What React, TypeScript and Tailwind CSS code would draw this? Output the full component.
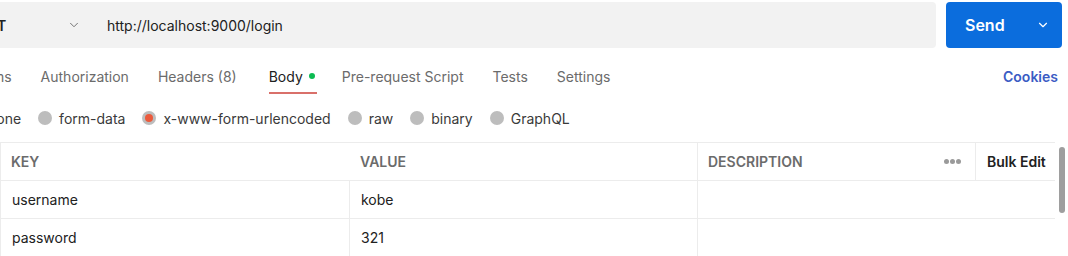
import { ChevronDown } from "lucide-react";

const tabs = [
  { label: "Params", active: false },
  { label: "Authorization", active: false },
  { label: "Headers (8)", active: false },
  { label: "Body", active: true },
  { label: "Pre-request Script", active: false },
  { label: "Tests", active: false },
  { label: "Settings", active: false },
];

const bodyTypes = ["none", "form-data", "x-www-form-urlencoded", "raw", "binary", "GraphQL"];

const rows = [
  { key: "username", value: "kobe" },
  { key: "password", value: "321" },
];

function Radio({ checked }: { checked?: boolean }) {
  return (
    <span className="flex h-[14px] w-[14px] items-center justify-center rounded-full bg-[#bdbdbd]">
      {checked && <span className="h-[8px] w-[8px] rounded-full bg-[#eb5a3c]" />}
    </span>
  );
}

export default function App() {
  return (
    <div className="h-[256px] w-[1068px] overflow-hidden bg-white font-['Inter',sans-serif] text-[14px] text-[#212121]">
      {/* url bar */}
      <div className="flex h-[50px] items-start gap-[10px] pt-[2px] pr-[6px]">
        <div className="flex h-[46px] flex-1 items-center rounded-r-[4px] bg-[#f2f2f2]">
          <span className="-ml-[32px] w-[92px] font-semibold">POST</span>
          <ChevronDown className="ml-[7px] h-[14px] w-[14px] text-[#6b6b6b]" strokeWidth={1.6} />
          <span className="ml-[26px] text-[#212121]">http://localhost:9000/login</span>
        </div>
        <button className="flex h-[46px] w-[116px] items-center rounded-[4px] bg-[#0b6ddd] text-white">
          <span className="ml-[19px] text-[16px] font-semibold">Send</span>
          <ChevronDown className="ml-auto mr-[12px] h-[14px] w-[14px]" strokeWidth={2} />
        </button>
      </div>

      {/* tabs */}
      <div className="mt-[2px] flex h-[48px] items-center pr-[10px]">
        <div className="-ml-[38px] flex h-full items-center gap-[29px]">
          {tabs.map((t) => (
            <div
              key={t.label}
              className={`relative flex h-full items-center ${t.active ? "ml-[3px] -mr-[2px] text-[#212121]" : "text-[#6b6b6b]"}`}
            >
              <span>{t.label}</span>
              {t.active && <span className="ml-[6px] h-[6px] w-[6px] rounded-full bg-[#0cbb52]" />}
              {t.active && <span className="absolute bottom-[6px] left-0 right-[-2px] h-[2px] bg-[#d9706a]" />}
            </div>
          ))}
        </div>
        <span className="ml-auto font-semibold text-[#3b5cc4]">Cookies</span>
      </div>

      {/* body types */}
      <div className="-ml-[12px] flex h-[36px] items-center gap-[17px]">
        {bodyTypes.map((b) => (
          <label key={b} className="flex items-center gap-[7px] text-[#3a3a3a]">
            {b !== "none" && <Radio checked={b === "x-www-form-urlencoded"} />}
            <span>{b}</span>
          </label>
        ))}
      </div>

      {/* table */}
      <div className="mt-[6px] flex">
        <div className="w-[1055px] border-t border-l border-[#ececec]">
          <div className="flex h-[38px] items-center border-b border-[#ececec] font-semibold text-[#6b6b6b]">
            <div className="w-[348px] pl-[10px]">KEY</div>
            <div className="w-[348px] pl-[11px]">VALUE</div>
            <div className="flex h-full flex-1 items-center border-l border-[#ececec] pl-[10px]">DESCRIPTION</div>
            <div className="flex h-full w-[46px] items-center justify-center gap-[1px]">
              <span className="h-[5px] w-[5px] rounded-full bg-[#9a9a9a]" />
              <span className="h-[5px] w-[5px] rounded-full bg-[#9a9a9a]" />
              <span className="h-[5px] w-[5px] rounded-full bg-[#9a9a9a]" />
            </div>
            <div className="flex h-full w-[80px] items-center border-l border-[#ececec] pl-[11px] text-[#212121]">
              Bulk Edit
            </div>
          </div>
          {rows.map((r) => (
            <div key={r.key} className="flex h-[38px] items-center border-b border-[#ececec]">
              <div className="w-[348px] pl-[11px]">{r.key}</div>
              <div className="flex h-full w-[348px] items-center border-l border-[#ececec] pl-[11px]">{r.value}</div>
              <div className="h-full flex-1 border-l border-[#ececec]" />
            </div>
          ))}
        </div>
        <div className="ml-[4px] mt-[5px] h-[66px] w-[6px] rounded-full bg-[#9e9e9e]" />
      </div>
    </div>
  );
}
